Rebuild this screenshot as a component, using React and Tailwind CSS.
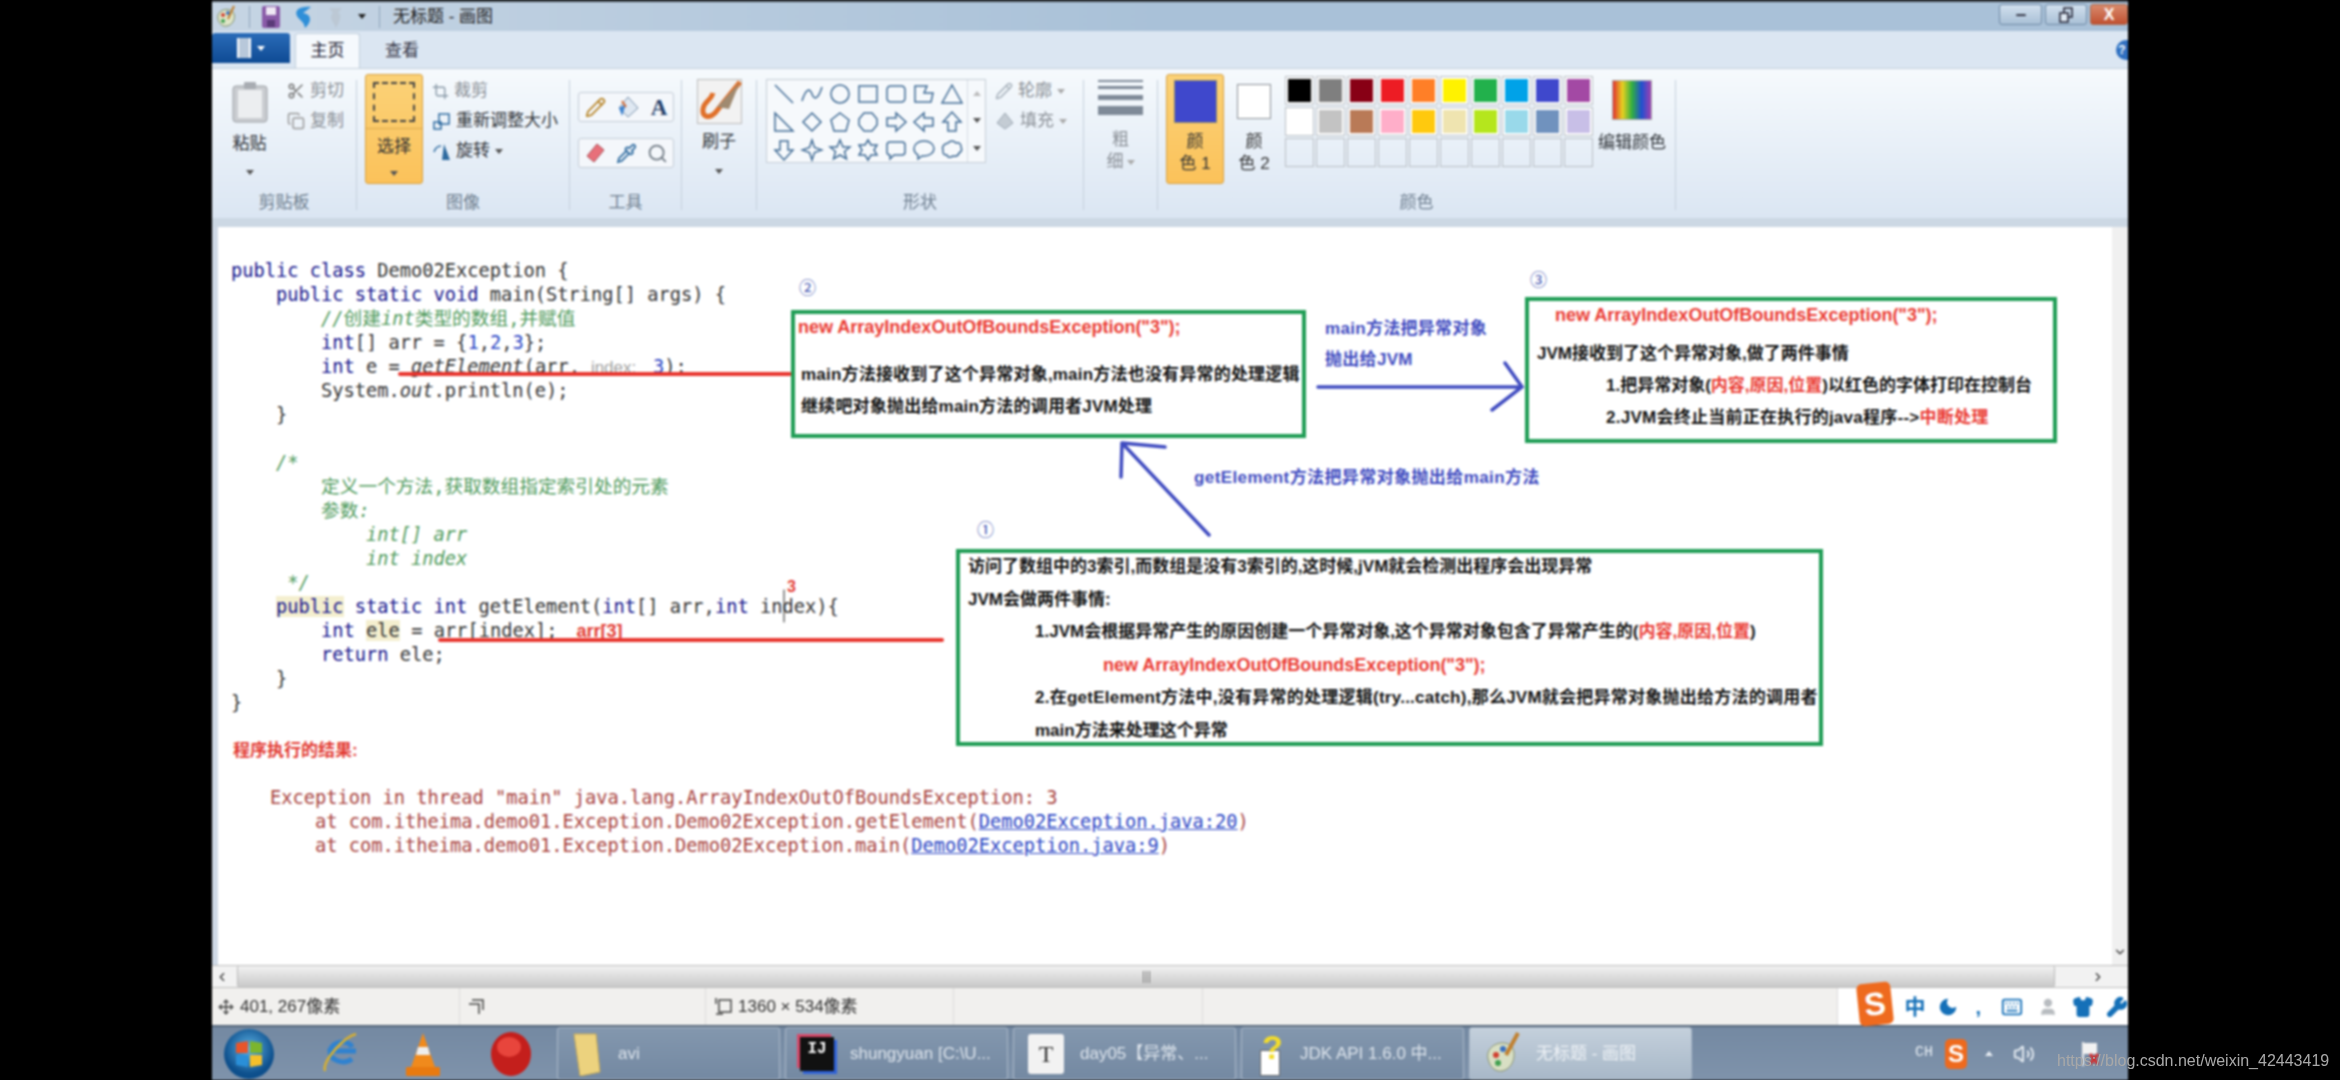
import React from "react"
import { Scissors, Copy, Crop, Pencil, Search, Pipette, Minus, Keyboard, User, Shirt, Wrench, Moon, Volume2, Move, ChevronLeft, ChevronRight, ChevronDown } from "lucide-react"

const palette1 = ["#000000", "#7f7f7f", "#880015", "#ed1c24", "#ff7f27", "#fff200", "#22b14c", "#00a2e8", "#3f48cc", "#a349a4"]
const palette2 = ["#ffffff", "#c3c3c3", "#b97a57", "#ffaec9", "#ffc90e", "#efe4b0", "#b5e61d", "#99d9ea", "#7092be", "#c8bfe7"]
const palette3 = Array(10).fill("transparent")

const shapes = [
  "M3 3L21 21",
  "M2 19C6 6 10 6 12 12S18 18 22 5",
  "M21 12A9 9 0 1 1 3 12A9 9 0 1 1 21 12Z",
  "M3 4H21V20H3Z",
  "M7 4H17Q21 4 21 8V16Q21 20 17 20H7Q3 20 3 16V8Q3 4 7 4Z",
  "M3 20V4H15L12 11H21L19 20Z",
  "M12 3L22 21H2Z",
  "M3 3L21 21H3Z",
  "M12 3L21 12L12 21L3 12Z",
  "M12 3L21 10L18 21H6L3 10Z",
  "M8 3H16L21 9V15L16 21H8L3 15V9Z",
  "M3 8H12V3L22 12L12 21V16H3Z",
  "M21 8H12V3L2 12L12 21V16H21Z",
  "M8 21V12H3L12 2L21 12H16V21Z",
  "M8 3V12H3L12 22L21 12H16V3Z",
  "M12 2L14.5 9.5L22 12L14.5 14.5L12 22L9.5 14.5L2 12L9.5 9.5Z",
  "M12 2L15 9H22L16.5 13.5L18.5 21L12 17L5.5 21L7.5 13.5L2 9H9Z",
  "M12 2L15 7H21L18 12L21 17H15L12 22L9 17H3L6 12L3 7H9Z",
  "M6 4H18Q21 4 21 7V14Q21 17 18 17H10L6 21V17Q3 17 3 14V7Q3 4 6 4Z",
  "M12 3C18 3 22 6.5 22 10.5S18 18 12 18H10L6 21V17C3.500 15.500 2 13 2 10.500C2 6.500 6 3 12 3Z",
  "M8 5Q12 1 16 5Q21 4 21 9Q23 13 19 15Q18 19 13 18Q8 21 7 17Q2 17 3 12Q1 7 8 5Z",
]

const cjk = "font-['Liberation_Sans','Noto_Sans_CJK_SC',sans-serif]"

const Group = ({ width, label, children }) => (
  <div className="flex shrink-0" style={{ width }}>
    <div className="flex min-w-0 flex-1 flex-col">
      <div className="flex h-[122px]">{children}</div>
      <div className="text-center text-[17px] leading-[26px] text-[#6f7f90]">{label}</div>
    </div>
    <div className="mb-[6px] mt-[11px] w-px bg-[#c5d0dc]"></div>
  </div>
)

const SmallAction = ({ icon, children, dim }) => (
  <div className={`flex h-[30px] items-center gap-[5px] text-[17px] ${dim ? "text-[#8a8f96]" : "text-[#2f3338]"}`}>
    {icon}
    {children}
  </div>
)

const Caret = ({ className = "" }) => <div className={`h-0 w-0 border-x-[4px] border-t-[5px] border-x-transparent border-t-[#555] ${className}`}></div>

const ToolBox = ({ children }) => (
  <div className="flex h-[30px] w-[96px] items-center justify-around rounded-[3px] border border-[#c3ccd6] bg-[#f4f7fb]">{children}</div>
)

const Swatch = ({ color }) => (
  <div className={`h-[29px] w-[29px] border border-[#b9bec4] p-[2px] ${color === "transparent" ? "" : "bg-white"}`}>
    <div className="h-full w-full" style={{ backgroundColor: color }}></div>
  </div>
)

const TaskButton = ({ icon, label, active }) => (
  <div className={`flex h-[53px] w-[223px] shrink-0 items-center gap-[16px] rounded-[3px] border border-[#aab8c8] pl-[14px] text-[17px] ${active ? "bg-gradient-to-b from-[#c4d0dc] to-[#a8b8c8] text-[#eef2f6]" : "bg-gradient-to-b from-[#8397ae] to-[#7489a2] text-[#dde4ec]"}`}>
    {icon}
    <span className="whitespace-nowrap">{label}</span>
  </div>
)

const Kw = ({ children }) => <span className="text-[#14148c]">{children}</span>
const Num = ({ children }) => <span className="text-[#2b45c4]">{children}</span>
const Mark = ({ children }) => <span className="bg-[#f4efcf]">{children}</span>
const Cm = ({ children }) => <span className="text-[#4f9a5c]">{children}</span>
const Red = ({ children }) => <span className="text-[#ea3a32]">{children}</span>
const Title = () => <span className="text-[18px] text-[#ea3a32]">new ArrayIndexOutOfBoundsException("3");</span>
const Line = ({ indent = 0, children }) => (
  <div className="h-[24px] whitespace-pre" style={{ paddingLeft: indent * 11.26 }}>{children}</div>
)

const Link = ({ children }) => <span className="text-[#2b45c4] underline">{children}</span>

export default function App() {
  return (
    <div className={`relative flex h-[1080px] w-[2340px] overflow-hidden bg-black ${cjk}`}>
      <div className="ml-[212px] flex h-[1080px] w-[1916px] flex-col blur-[0.8px]">
        {/* Title bar */}
        <div className="flex h-[31px] items-center border-t-2 border-[#3d444b] bg-gradient-to-r from-[#c6d5e4] via-[#a9c1d8] to-[#a9c1d8] pl-[2px]">
          <svg width="24" height="26" viewBox="0 0 24 24"><path d="M4 14C2 6 12 2 18 6C23 10 20 20 13 21C9 22 5 19 4 14Z" fill="#dfe6c8" stroke="#7f8f70" /><circle cx="9" cy="10" r="2" fill="#d04030" /><circle cx="14" cy="8" r="2" fill="#3a70c0" /><circle cx="9" cy="16" r="2" fill="#40a050" /><path d="M20 1L14 14" stroke="#c08030" strokeWidth="2" /></svg>
          <div className="mx-[11px] h-[22px] w-px bg-[#8fa5bb]"></div>
          <svg width="20" height="24" viewBox="0 0 20 24"><rect x="1" y="1" width="18" height="22" rx="2" fill="#8a5ba8" /><rect x="5" y="2" width="10" height="8" fill="#efe8f4" /><rect x="6" y="15" width="8" height="7" fill="#5a3a78" /></svg>
          <svg className="ml-[10px]" width="24" height="26" viewBox="0 0 24 24" fill="none"><path d="M20 2C9 1 3 5 6 11C8 15 13 16 14 23C21 17 21 9 12 8L20 2Z" fill="#2f8fd8" /></svg>
          <svg className="ml-[9px]" width="24" height="26" viewBox="0 0 24 24" fill="none"><path d="M5 3H18L14 8C19 9 15 18 12 23C9 16 4 12 9 8Z" fill="#bcc8d4" /></svg>
          <Caret className="ml-[10px] !border-t-[#222]" />
          <div className="mx-[13px] h-[22px] w-px bg-[#8fa5bb]"></div>
          <span className="text-[17px] leading-none text-[#222]">无标题 - 画图</span>
          <div className="ml-auto flex items-center gap-[3px] self-start pt-[2px]">
            <div className="flex h-[21px] w-[43px] items-center justify-center rounded-[3px] border border-[#6f8aa6] bg-gradient-to-b from-[#d2e0ee] to-[#a9c0d6]"><Minus size={14} className="text-[#223]" strokeWidth={3} /></div>
            <div className="flex h-[21px] w-[42px] items-center justify-center rounded-[3px] border border-[#6f8aa6] bg-gradient-to-b from-[#d2e0ee] to-[#a9c0d6]"><svg width="14" height="16" viewBox="0 0 14 16" fill="none" stroke="#223" strokeWidth="1.500"><rect x="5" y="1" width="8" height="9" /><rect x="1" y="6" width="8" height="9" fill="#dfe8f2" /></svg></div>
            <div className="flex h-[21px] w-[38px] items-center justify-center rounded-[3px] border border-[#a86a50] bg-gradient-to-b from-[#d88a6c] to-[#c05030] text-[16px] font-bold leading-none text-white">X</div>
          </div>
        </div>

        {/* Tabs */}
        <div className="flex h-[37px] items-end bg-[#dbe6f2]">
          <div className="mb-[5px] flex h-[30px] w-[78px] items-center justify-center gap-[6px] rounded-t-[3px] bg-gradient-to-b from-[#2a6cb8] to-[#0e4a94]">
            <div className="h-[20px] w-[14px] border-x-2 border-white bg-[#b8c8da]"></div>
            <Caret className="!border-t-white" />
          </div>
          <div className="ml-[5px] flex h-[35px] w-[65px] items-center justify-center rounded-t-[3px] border-x border-t border-[#c2cfdc] bg-[#f5f9fd] text-[17px] text-[#223]">主页</div>
          <div className="ml-[25px] flex h-[35px] items-center text-[17px] text-[#334]">查看</div>
          <div className="mb-[8px] ml-auto flex h-[20px] w-[12px] items-center justify-center rounded-l-full bg-[#2f6fc0] text-[12px] font-bold text-white">?</div>
        </div>

        {/* Ribbon */}
        <div className="flex h-[150px] border-t border-[#c3cfdb] bg-gradient-to-b from-[#f6fafd] to-[#dbe6f3] pb-[2px]">
          <Group width={145} label="剪贴板">
            <div className="flex w-[75px] flex-col items-center pt-[12px]">
              <svg width="38" height="42" viewBox="0 0 38 42"><rect x="2" y="5" width="34" height="36" rx="3" fill="#c9ccd0" stroke="#9a9ea4" /><rect x="7" y="9" width="24" height="28" fill="#eceef0" /><rect x="13" y="1" width="12" height="7" rx="1" fill="#a8acb2" /></svg>
              <span className="mt-[8px] text-[17px] text-[#2f3338]">粘贴</span>
              <Caret className="mt-[13px]" />
            </div>
            <div className="flex flex-col pt-[7px]">
              <SmallAction dim icon={<Scissors size={18} className="text-[#777]" />}>剪切</SmallAction>
              <SmallAction dim icon={<Copy size={18} className="text-[#999]" />}>复制</SmallAction>
            </div>
          </Group>

          <Group width={213} label="图像">
            <div className="ml-[8px] mt-[5px] flex h-[110px] w-[58px] flex-col items-center rounded-[3px] border border-[#d7a040] bg-gradient-to-b from-[#fbd277] to-[#fbc25a]">
              <div className="flex h-[54px] w-full items-center justify-center border-b border-[#dca94c]">
                <div className="h-[40px] w-[42px] border-2 border-dashed border-[#444]"></div>
              </div>
              <span className="mt-[5px] text-[17px] text-[#333]">选择</span>
              <Caret className="mt-[11px]" />
            </div>
            <div className="ml-[9px] flex flex-col pt-[7px]">
              <SmallAction dim icon={<Crop size={17} className="text-[#8a9aa8]" />}>裁剪</SmallAction>
              <SmallAction icon={<svg width="19" height="19" viewBox="0 0 19 19" fill="none" stroke="#2d6a9f" strokeWidth="1.500"><rect x="7" y="2" width="10" height="10" /><rect x="2" y="10" width="7" height="7" /></svg>}>重新调整大小</SmallAction>
              <SmallAction icon={<svg width="19" height="19" viewBox="0 0 19 19"><path d="M12 2L18 18H10Z" fill="#2d6a9f" /><path d="M2 10Q4 4 9 4" stroke="#2d6a9f" fill="none" strokeWidth="1.500" /></svg>}>旋转<Caret /></SmallAction>
            </div>
          </Group>

          <Group width={112} label="工具">
            <div className="ml-[8px] flex flex-col gap-[16px] pt-[23px]">
              <ToolBox>
                <Pencil size={21} className="text-[#b8862a]" />
                <svg width="22" height="24" viewBox="0 0 22 24"><path d="M11 2L21 13L11 22L2 13Z" fill="#dfe8f2" stroke="#7a92ac" /><path d="M2 13L5 21L9 9Z" fill="#3f84d0" /><path d="M5 6L9 12" stroke="#d86a30" strokeWidth="2" /></svg>
                <span className="font-['Liberation_Serif',serif] text-[23px] font-bold leading-none text-[#26426c]">A</span>
              </ToolBox>
              <ToolBox>
                <svg width="22" height="22" viewBox="0 0 22 22"><path d="M13 2L20 8L10 20L3 14Z" fill="#e8707a" stroke="#a85058" /></svg>
                <Pipette size={21} className="text-[#2d6a9f]" />
                <Search size={21} className="text-[#707a84]" />
              </ToolBox>
            </div>
          </Group>

          <Group width={75} label="">
            <div className="flex w-full flex-col items-center pt-[10px]">
              <svg width="45" height="45" viewBox="0 0 45 45"><rect x="0.500" y="0.500" width="44" height="44" fill="#f2f2f2" stroke="#bbb" /><path d="M43 3L18 34C12 40 5 38 6 30C7 22 14 22 16 14" stroke="#e0702a" strokeWidth="5" fill="none" /><path d="M43 3L32 30L20 28Z" fill="#a08a70" /></svg>
              <span className="mt-[5px] text-[17px] text-[#2f3338]">刷子</span>
              <Caret className="mt-[14px]" />
            </div>
          </Group>

          <Group width={327} label="形状">
            <div className="ml-[9px] mt-[10px] flex h-[84px] w-[220px] border border-[#c5cdd6] bg-[#f6f9fc]">
              <div className="grid grid-cols-[repeat(7,28px)] grid-rows-[repeat(3,28px)] pl-[3px]">
                {shapes.map((d, i) => (
                  <div key={i} className="flex items-center justify-center">
                    <svg width="24" height="24" viewBox="0 0 24 24" fill="none" stroke="#3f6a94" strokeWidth="1.500"><path d={d} /></svg>
                  </div>
                ))}
              </div>
              <div className="ml-auto flex w-[18px] flex-col items-center justify-around border-l border-[#d5dce4] text-[#777]">
                <Caret className="rotate-180 !border-t-[#bbb]" />
                <Caret />
                <Caret />
              </div>
            </div>
            <div className="ml-[9px] flex flex-col pt-[7px]">
              <SmallAction dim icon={<Pencil size={18} className="text-[#aab4be]" />}>轮廓<Caret className="!border-t-[#aaa]" /></SmallAction>
              <SmallAction dim icon={<svg width="20" height="20" viewBox="0 0 20 20"><path d="M10 2L18 12L10 18L2 12Z" fill="#c4ccd4" stroke="#9aa6b2" /></svg>}>填充<Caret className="!border-t-[#aaa]" /></SmallAction>
            </div>
          </Group>

          <Group width={74} label="">
            <div className="flex w-full flex-col items-center pt-[11px]">
              <div className="flex w-[45px] flex-col gap-[4px]">
                <div className="h-[2px] bg-[#7f8a98]"></div>
                <div className="h-[3px] bg-[#7f8a98]"></div>
                <div className="mt-[2px] h-[5px] bg-[#7f8a98]"></div>
                <div className="mt-[2px] h-[9px] bg-[#7f8a98]"></div>
              </div>
              <span className="mt-[14px] text-[17px] leading-[22px] text-[#8a8f96]">粗</span>
              <span className="flex items-center gap-[3px] text-[17px] leading-[22px] text-[#8a8f96]">细<Caret className="!border-t-[#aaa]" /></span>
            </div>
          </Group>

          <Group width={518} label="颜色">
            <div className="ml-[8px] mt-[5px] flex h-[110px] w-[58px] flex-col items-center rounded-[3px] border border-[#d7a040] bg-gradient-to-b from-[#fbd277] to-[#fbc25a] pt-[5px]">
              <div className="h-[43px] w-[43px] border border-[#8a8a70] bg-[#3f48cc]"></div>
              <span className="mt-[8px] text-[17px] leading-[22px] text-[#333]">颜</span>
              <span className="text-[17px] leading-[22px] text-[#333]">色 1</span>
            </div>
            <div className="ml-[12px] mt-[15px] flex w-[36px] flex-col items-center">
              <div className="h-[35px] w-[34px] border border-[#8a8f96] bg-white"></div>
              <span className="mt-[12px] text-[17px] leading-[22px] text-[#333]">颜</span>
              <span className="whitespace-nowrap text-[17px] leading-[22px] text-[#333]">色 2</span>
            </div>
            <div className="ml-[13px] mt-[7px] flex flex-col gap-[2px]">
              {[palette1, palette2, palette3].map((row, r) => (
                <div key={r} className="flex gap-[2px]">
                  {row.map((c, i) => <Swatch key={i} color={c} />)}
                </div>
              ))}
            </div>
            <div className="ml-[4px] mt-[11px] flex w-[70px] flex-col items-center">
              <div className="h-[40px] w-[40px] border border-[#aaa] bg-[linear-gradient(90deg,#e03030,#e8d020,#30b040,#2050d0,#a040b0)]"></div>
              <span className="mt-[10px] whitespace-nowrap text-[17px] text-[#2f3338]">编辑颜色</span>
            </div>
          </Group>
        </div>

        {/* Work area */}
        <div className="h-[9px] bg-[#ccd8e4]"></div>
        <div className="flex min-h-0 flex-1">
          <div className="w-[6px] bg-[#cfd9e6]"></div>
          <div className="relative flex-1 bg-white font-['DejaVu_Sans_Mono','Noto_Sans_CJK_SC',monospace] text-[18.7px] leading-[24px] text-[#333]">
            <div className="pl-[13px] pt-[32px]">
              <Line><Kw>public class</Kw> Demo02Exception {"{"}</Line>
              <Line indent={4}><Kw>public static void</Kw> main(String[] args) {"{"}</Line>
              <Line indent={8}><Cm><i>//</i>创建<i>int</i>类型的数组,并赋值</Cm></Line>
              <Line indent={8}><Kw>int</Kw>[] arr = {"{"}<Num>1</Num>,<Num>2</Num>,<Num>3</Num>{"};"}</Line>
              <Line indent={8}><Kw>int</Kw> e = <i>getElement</i>(arr,<span className="inline-block w-[73px] pl-[11px] font-['Liberation_Sans',sans-serif] text-[17px] text-[#a0a0a0]">index:</span><Num>3</Num>);</Line>
              <Line indent={8}>System.<i>out</i>.println(e);</Line>
              <Line indent={4}>{"}"}</Line>
              <Line> </Line>
              <Line indent={4}><Cm><i>/*</i></Cm></Line>
              <Line indent={8}><Cm>定义一个方法,获取数组指定索引处的元素</Cm></Line>
              <Line indent={8}><Cm>参数<i>:</i></Cm></Line>
              <Line indent={12}><Cm><i>int[] arr</i></Cm></Line>
              <Line indent={12}><Cm><i>int index</i></Cm></Line>
              <Line indent={5}><Cm><i>*/</i></Cm></Line>
              <Line indent={4}><Mark><Kw>public</Kw></Mark> <Kw>static int</Kw> getElement(<Kw>int</Kw>[] arr,<Kw>int</Kw> index){"{"}</Line>
              <Line indent={8}><Kw>int</Kw> <Mark>ele</Mark> = arr[index];<span className="ml-[19px] font-['Liberation_Sans',sans-serif] text-[18px] font-bold text-[#e23a32]">arr[3]</span></Line>
              <Line indent={8}><Kw>return</Kw> ele;</Line>
              <Line indent={4}>{"}"}</Line>
              <Line>{"}"}</Line>
              <div className="ml-[2px] mt-[24px] font-['Liberation_Sans','Noto_Sans_CJK_SC',sans-serif] text-[17px] font-bold text-[#e23a32]">程序执行的结果:</div>
              <div className="mt-[23px] pl-[39px] text-[#a8433e]">
                <div className="h-[24px] whitespace-pre">Exception in thread "main" java.lang.ArrayIndexOutOfBoundsException: 3</div>
                <div className="h-[24px] whitespace-pre pl-[45px]">at com.itheima.demo01.Exception.Demo02Exception.getElement(<Link>Demo02Exception.java:20</Link>)</div>
                <div className="h-[24px] whitespace-pre pl-[45px]">at com.itheima.demo01.Exception.Demo02Exception.main(<Link>Demo02Exception.java:9</Link>)</div>
              </div>
            </div>

            {/* Annotations drawn on top of the picture */}
            <svg className="pointer-events-none absolute left-0 top-0 h-full w-full" fill="none" strokeLinecap="round">
              <path d="M182 147H572" stroke="#e8352e" strokeWidth="4" />
              <path d="M222 413H724" stroke="#e8352e" strokeWidth="4" />
              <path d="M566 363V395" stroke="#222" strokeWidth="1" />
              <path d="M1100 160H1304M1287 136L1304 160L1274 183" stroke="#3f4bc0" strokeWidth="3.500" />
              <path d="M991 308L904 216M904 216L947 220M904 216L903 250" stroke="#3f4bc0" strokeWidth="3.500" />
            </svg>
            <div className="absolute left-[569px] top-[352px] font-['Liberation_Sans',sans-serif] text-[16px] font-bold leading-none text-[#e23a32]">3</div>

            <div className={`absolute left-[581px] top-[52px] text-[17px] leading-[20px] text-[#3b4fae] ${cjk}`}>②</div>
            <div className={`absolute left-[1312px] top-[44px] text-[17px] leading-[20px] text-[#3b4fae] ${cjk}`}>③</div>
            <div className={`absolute left-[759px] top-[294px] text-[17px] leading-[20px] text-[#3b4fae] ${cjk}`}>①</div>

            <div className={`absolute left-[1107px] top-[86px] text-[17px] font-bold leading-[31px] tracking-[0.3px] text-[#3f4bc0] ${cjk}`}>
              <div>main方法把异常对象</div>
              <div>抛出给JVM</div>
            </div>
            <div className={`absolute left-[976px] top-[238px] whitespace-nowrap text-[17px] font-bold leading-[26px] tracking-[0.4px] text-[#3f4bc0] ${cjk}`}>getElement方法把异常对象抛出给main方法</div>

            {/* Box 2 */}
            <div className={`absolute left-[573px] top-[83px] h-[128px] w-[515px] whitespace-nowrap border-4 border-[#1f9d55] text-[17px] font-bold text-[#111] ${cjk}`}>
              <div className="pl-[3px] leading-[26px]"><Title /></div>
              <div className="mt-[18px] pl-[6px] leading-[32px] tracking-[0.2px]">main方法接收到了这个异常对象,main方法也没有异常的处理逻辑</div>
              <div className="pl-[6px] leading-[32px] tracking-[0.2px]">继续吧对象抛出给main方法的调用者JVM处理</div>
            </div>

            {/* Box 3 */}
            <div className={`absolute left-[1307px] top-[70px] h-[146px] w-[532px] whitespace-nowrap border-4 border-[#1f9d55] text-[17px] font-bold text-[#111] ${cjk}`}>
              <div className="pl-[26px] leading-[28px]"><Title /></div>
              <div className="mt-[8px] pl-[8px] leading-[32px]">JVM接收到了这个异常对象,做了两件事情</div>
              <div className="pl-[77px] leading-[32px]">1.把异常对象(<Red>内容,原因,位置</Red>)以红色的字体打印在控制台</div>
              <div className="pl-[77px] leading-[32px] tracking-[0.25px]">2.JVM会终止当前正在执行的java程序--&gt;<Red>中断处理</Red></div>
            </div>

            {/* Box 1 */}
            <div className={`absolute left-[738px] top-[322px] h-[197px] w-[867px] whitespace-nowrap border-4 border-[#1f9d55] text-[17px] font-bold leading-[32.5px] text-[#111] ${cjk}`}>
              <div className="-mt-[2px] pl-[8px]">访问了数组中的3索引,而数组是没有3索引的,这时候,jVM就会检测出程序会出现异常</div>
              <div className="pl-[8px]">JVM会做两件事情:</div>
              <div className="pl-[75px]">1.JVM会根据异常产生的原因创建一个异常对象,这个异常对象包含了异常产生的(<Red>内容,原因,位置</Red>)</div>
              <div className="pl-[143px]"><Title /></div>
              <div className="pl-[75px] tracking-[0.25px]">2.在getElement方法中,没有异常的处理逻辑(try...catch),那么JVM就会把异常对象抛出给方法的调用者</div>
              <div className="pl-[75px]">main方法来处理这个异常</div>
            </div>
          </div>
          <div className="flex w-[16px] items-end justify-center bg-[#f0f0f0] pb-[6px]"><ChevronDown size={14} className="text-[#333]" /></div>
        </div>

        {/* Bottom scrollbar */}
        <div className="flex h-[23px] items-center border-y border-[#bdbdbd] bg-[#f2f2f2]">
          <ChevronLeft size={14} className="ml-[3px] text-[#333]" />
          <div className="relative ml-[8px] flex h-full w-[1818px] items-center justify-center rounded-[2px] border-x border-[#bbb] bg-gradient-to-b from-[#f2f2f2] to-[#c8c8c8]">
            <div className="flex gap-[2px]">
              <div className="h-[12px] w-px bg-[#777]"></div>
              <div className="h-[12px] w-px bg-[#777]"></div>
              <div className="h-[12px] w-px bg-[#777]"></div>
            </div>
          </div>
          <ChevronRight size={14} className="ml-[36px] text-[#333]" />
        </div>

        {/* Status bar */}
        <div className="flex h-[37px] items-center bg-[#f1f0ee] text-[17px] text-[#333]">
          <div className="flex h-full w-[250px] items-center gap-[6px] border-r border-[#dcdcdc] pl-[6px]"><Move size={16} className="text-[#444]" />401, 267像素</div>
          <div className="flex h-full w-[249px] items-center border-r border-[#dcdcdc] pl-[8px]"><svg width="18" height="20" viewBox="0 0 18 20" fill="none" stroke="#444" strokeWidth="1.500"><path d="M4 3H15V13M1 7H11V17" /></svg></div>
          <div className="flex h-full w-[250px] items-center gap-[5px] border-r border-[#dcdcdc] pl-[9px]"><svg width="18" height="20" viewBox="0 0 18 20" fill="none" stroke="#444" strokeWidth="1.500"><rect x="4" y="3" width="12" height="12" /><path d="M1 1V7M1 17H8" /></svg>1360 × 534像素</div>
          <div className="h-full w-[252px] border-r border-[#dcdcdc]"></div>
          <div className="h-full w-[642px] border-r border-[#dcdcdc]"></div>
          <div className="flex h-full flex-1 items-center gap-[12px] bg-white pl-[20px] text-[#1570b8]">
            <div className="-mt-[6px] flex h-[42px] w-[34px] shrink-0 -rotate-6 items-center justify-center rounded-[5px] bg-[#ee6a1e] text-[32px] font-bold leading-none text-white">S</div>
            <span className="text-[21px] font-bold leading-none">中</span>
            <Moon size={22} fill="#1570b8" strokeWidth={0} />
            <span className="ml-[4px] mr-[8px] text-[20px] font-bold leading-none">,</span>
            <Keyboard size={22} />
            <User size={20} className="ml-[3px] text-[#b8bcc0]" fill="#b8bcc0" />
            <Shirt size={22} className="ml-[2px]" fill="#1570b8" />
            <Wrench size={22} fill="#1570b8" />
          </div>
        </div>

        {/* Taskbar */}
        <div className="flex h-[55px] items-center border-t-2 border-[#56677a] bg-gradient-to-b from-[#7489a2] to-[#7f93ab]">
          <div className="flex w-[88px] shrink-0 pl-[11px]">
            <svg width="52" height="52" viewBox="0 0 52 52"><defs><radialGradient id="orb" cx="0.500" cy="0.400"><stop offset="0" stopColor="#5fb5e8" /><stop offset="1" stopColor="#0d4f8c" /></radialGradient></defs><ellipse cx="26" cy="26" rx="25" ry="25" fill="url(#orb)" /><path d="M13 15L25 13V25H13Z" fill="#e8552a" /><path d="M27 13L39 15V25H27Z" fill="#7cb52e" /><path d="M13 27H25V39L13 37Z" fill="#2a8fd8" /><path d="M27 27H39V37L27 39Z" fill="#f5c02a" /></svg>
          </div>
          <div className="flex w-[80px] shrink-0 justify-center">
            <svg width="40" height="46" viewBox="0 0 40 46" fill="none"><path d="M36 20H10C10 30 24 34 32 28" stroke="#2f82d0" strokeWidth="5" /><path d="M10 20C12 10 28 8 32 16" stroke="#2f82d0" strokeWidth="5" /><path d="M5 40C2 30 24 6 36 3" stroke="#d8b030" strokeWidth="2.500" /></svg>
          </div>
          <div className="flex w-[85px] shrink-0 justify-center">
            <svg width="38" height="46" viewBox="0 0 38 46"><path d="M19 2L31 36H7Z" fill="#f08a1c" /><path d="M14 16H24L26 24H12Z" fill="#eee" /><rect x="2" y="36" width="34" height="9" rx="1" fill="#e87a10" /></svg>
          </div>
          <div className="flex w-[92px] shrink-0 justify-center">
            <svg width="42" height="46" viewBox="0 0 42 46"><ellipse cx="21" cy="23" rx="20" ry="22" fill="#c41f1c" /><ellipse cx="19" cy="16" rx="12" ry="10" fill="#e8453c" /></svg>
          </div>
          <div className="flex gap-[5px]">
            <TaskButton label="avi" icon={<svg width="30" height="44" viewBox="0 0 30 44"><path d="M2 2H24L28 40L8 44Z" fill="#ecd27e" stroke="#c4a858" /></svg>} />
            <TaskButton label="shungyuan [C:\U..." icon={<div className="flex h-[34px] w-[34px] shrink-0 items-start justify-center bg-[#111] font-['Liberation_Mono',monospace] text-[16px] font-bold leading-[24px] text-white shadow-[-3px_-3px_0_#d84868,3px_3px_0_#2f62d8]">IJ</div>} />
            <TaskButton label="day05【异常、..." icon={<div className="flex h-[40px] w-[36px] shrink-0 items-center justify-center rounded-[3px] bg-[#f2f2f2] font-['Liberation_Serif',serif] text-[24px] leading-none text-[#333]">T</div>} />
            <TaskButton label="JDK API 1.6.0 中..." icon={<div className="relative flex h-[44px] w-[28px] shrink-0 items-end justify-center"><div className="h-[26px] w-[20px] border border-[#666] bg-white"></div><span className="absolute -top-[2px] left-[6px] font-['Liberation_Sans',sans-serif] text-[34px] font-bold leading-none text-[#f3dc2a]">?</span></div>} />
            <TaskButton active label="无标题 - 画图" icon={<svg width="36" height="46" viewBox="0 0 36 46"><path d="M4 28C1 16 16 8 26 14C34 20 30 38 18 40C11 41 6 36 4 28Z" fill="#d8dfc4" stroke="#8a9470" /><circle cx="12" cy="24" r="3" fill="#d04030" /><circle cx="19" cy="18" r="3" fill="#3a70c0" /><circle cx="14" cy="32" r="3" fill="#40a050" /><path d="M34 2L22 24" stroke="#c08030" strokeWidth="4" /></svg>} />
          </div>
          <div className="ml-[223px] flex items-center text-[#e8eef4]">
            <span className="font-['Liberation_Mono',monospace] text-[15px]">CH</span>
            <div className="ml-[12px] flex h-[30px] w-[22px] items-center justify-center rounded-[5px] bg-[#ee6a1e] text-[24px] font-bold leading-none text-white">S</div>
            <Caret className="ml-[18px] rotate-180 !border-t-[#e8eef4]" />
            <Volume2 size={22} className="ml-[20px]" />
            <svg className="ml-[45px]" width="20" height="28" viewBox="0 0 20 28"><path d="M3 2V26" stroke="#eee" strokeWidth="2" /><path d="M4 3H17V14H4Z" fill="#f2f2f2" /><path d="M10 14L18 24M18 14L10 24" stroke="#d03030" strokeWidth="3" /></svg>
          </div>
        </div>
      </div>

      {/* Video watermark */}
      <div className="absolute left-[2057px] top-[1050px] font-['Liberation_Sans',sans-serif] text-[16px] leading-[22px] text-[#a8a8a8]">https://blog.csdn.net/weixin_42443419</div>
    </div>
  )
}
